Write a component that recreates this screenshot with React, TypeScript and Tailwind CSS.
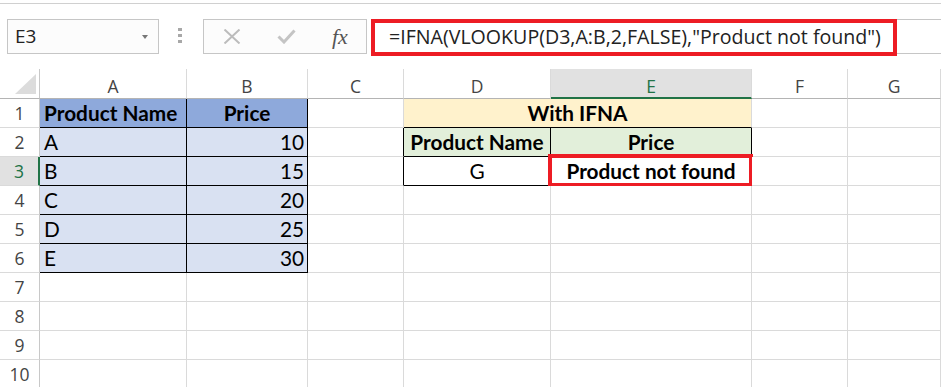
import React from 'react';

// Excel sheet: IFNA + VLOOKUP example

const COLS = 'grid grid-cols-[40px_147px_121px_96px_147px_201px_96px_1fr]';
const CELL_FONT = "font-['Lato','Liberation_Sans',sans-serif]";
const UI_FONT = "font-['Open_Sans','Liberation_Sans',sans-serif]";

type CellSpec = {
  t?: string;
  bg?: string;
  al?: 'l' | 'c' | 'r';
  bold?: boolean;
  r?: 'k' | 'g';
  b?: 'k' | 'g';
  span?: boolean;
  mark?: boolean;
};

const empty: CellSpec = {};
const blue = 'bg-[#8ea9db]';
const lav = 'bg-[#d9e1f2]';

const rows: CellSpec[][] = [
  [
    { t: 'Product Name', bg: blue, bold: true, r: 'k', b: 'k' },
    { t: 'Price', bg: blue, bold: true, al: 'c', r: 'k', b: 'k' },
    empty,
    { t: 'With IFNA', bg: 'bg-[#fff2cc]', bold: true, al: 'c', b: 'k', span: true },
    empty,
    empty,
  ],
  [
    { t: 'A', bg: lav, r: 'k', b: 'k' },
    { t: '10', bg: lav, al: 'r', r: 'k', b: 'k' },
    { r: 'k' },
    { t: 'Product Name', bg: 'bg-[#e2efda]', bold: true, al: 'c', r: 'k', b: 'k' },
    { t: 'Price', bg: 'bg-[#e2efda]', bold: true, al: 'c', r: 'k', b: 'k' },
    empty,
    empty,
  ],
  [
    { t: 'B', bg: lav, r: 'k', b: 'k' },
    { t: '15', bg: lav, al: 'r', r: 'k', b: 'k' },
    { r: 'k' },
    { t: 'G', al: 'c', r: 'k', b: 'k' },
    { t: 'Product not found', bold: true, al: 'c', r: 'k', b: 'k', mark: true },
    empty,
    empty,
  ],
  ...[
    ['C', '20'],
    ['D', '25'],
    ['E', '30'],
  ].map(([n, p]) => [
    { t: n, bg: lav, r: 'k', b: 'k' } as CellSpec,
    { t: p, bg: lav, al: 'r', r: 'k', b: 'k' } as CellSpec,
    empty,
    empty,
    empty,
    empty,
    empty,
  ]),
  ...[7, 8, 9, 10].map(() => [empty, empty, empty, empty, empty, empty, empty]),
];

function Cell({ c }: { c: CellSpec }) {
  const align = c.al === 'c' ? 'text-center' : c.al === 'r' ? 'text-right pr-[3px]' : 'text-left pl-[4px]';
  return (
    <div
      className={`relative h-[29px] border-r border-b leading-[28px] text-[20.8px] text-black whitespace-nowrap ${CELL_FONT}
        ${c.r === 'k' ? 'border-r-black' : 'border-r-[#dadada]'}
        ${c.b === 'k' ? 'border-b-black' : 'border-b-[#dadada]'}
        ${c.span ? 'col-span-2' : ''} ${c.bg || 'bg-white'} ${c.bold ? 'font-bold' : ''} ${align}`}
    >
      {c.t}
      {c.mark && (
        <div className="absolute -left-[3px] -top-[3px] -right-[2px] -bottom-[2px] border-4 border-[#ed1c24]" />
      )}
    </div>
  );
}

export default function App() {
  const letters = ['A', 'B', 'C', 'D', 'E', 'F', 'G'];

  return (
    <div className="w-[941px] h-[387px] bg-white overflow-hidden">
      {/* ribbon edge */}
      <div className="h-[4px] border-b border-[#d0d0d0]" />

      {/* formula bar */}
      <div className={`mt-[14px] flex items-start h-[37px] ${UI_FONT}`}>
        <div className="ml-[7px] mt-[1px] w-[152px] h-[35px] border border-[#c6c6c6] bg-[#fcfcfc] flex items-center justify-between pl-[7px] pr-[10px]">
          <span className="text-[19px] text-[#222]">E3</span>
          <span className="w-0 h-0 border-l-[3.5px] border-r-[3.5px] border-t-[4px] border-l-transparent border-r-transparent border-t-[#777]" />
        </div>
        <div className="ml-[19px] mt-[10px] flex flex-col gap-[3px]">
          <span className="w-[4px] h-[3px] bg-[#a8a8a8]" />
          <span className="w-[4px] h-[3px] bg-[#a8a8a8]" />
          <span className="w-[4px] h-[3px] bg-[#a8a8a8]" />
        </div>
        <div className="ml-[21px] mt-[1px] w-[164px] h-[35px] border border-[#c6c6c6] bg-[#fcfcfc] flex items-center">
          <svg width="18" height="15" viewBox="0 0 18 15" className="ml-[19px]">
            <path d="M1.5 0.5 L16.5 14.5 M16.5 0.5 L1.5 14.5" stroke="#bcbcbc" strokeWidth="2" fill="none" />
          </svg>
          <svg width="19" height="15" viewBox="0 0 19 15" className="ml-[36px]">
            <path d="M1.5 7.5 L7 13 L17.5 1.5" stroke="#c4c4c4" strokeWidth="3" fill="none" />
          </svg>
          <span className="ml-[36px] text-[22px] italic text-[#555] font-['Liberation_Serif',serif] leading-none">fx</span>
        </div>
        <div className="relative ml-[4px] mt-[1px] flex-1 h-[35px] border-y border-[#c6c6c6] flex items-center pl-[18px]">
          <span className="text-[19.6px] text-[#222] whitespace-nowrap">=IFNA(VLOOKUP(D3,A:B,2,FALSE),"Product not found")</span>
          <div className="absolute left-0 -top-[1px] w-[526px] h-[37px] border-4 border-[#ed1c24]" />
        </div>
      </div>

      {/* sheet */}
      <div className={`mt-[14px] ${COLS}`}>
        <div className="relative h-[30px] border-r border-b border-r-[#c8c8c8] border-b-[#b4b4b4] bg-white">
          <svg width="40" height="30" className="absolute left-0 top-0">
            <polygon points="36,25 36,5 15,25" fill="#dcdcdc" />
          </svg>
        </div>
        {letters.map((l) => (
          <div
            key={l}
            className={`h-[30px] text-center leading-[35px] text-[17.5px] ${UI_FONT} border-r border-r-[#dadada]
              ${l === 'E' ? 'bg-[#e1e1e1] border-b-2 border-b-[#217346] text-[#217346] leading-[34px]' : 'bg-white border-b border-b-[#b4b4b4] text-[#444]'}`}
          >
            {l}
          </div>
        ))}
        {rows.map((row, i) => (
          <React.Fragment key={i}>
            <div
              className={`h-[29px] border-b border-b-[#dadada] text-center leading-[28px] text-[17.5px] ${UI_FONT}
                ${i === 2 ? 'bg-[#e1e1e1] border-r-2 border-r-[#217346] text-[#217346]' : 'bg-white border-r border-r-[#c8c8c8] text-[#444]'}`}
            >
              {i + 1}
            </div>
            {row.map((c, j) => (
              <Cell key={j} c={c} />
            ))}
          </React.Fragment>
        ))}
      </div>
    </div>
  );
}
